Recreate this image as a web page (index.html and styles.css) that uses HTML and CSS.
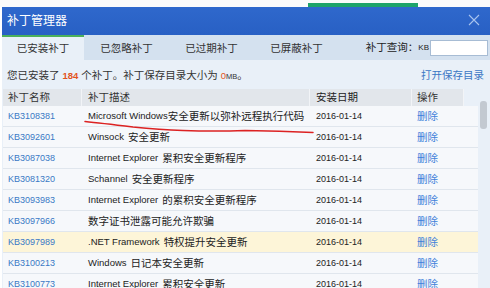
FILE: index.html
```html
<!DOCTYPE html>
<html lang="zh-CN">
<head>
<meta charset="utf-8">
<title>补丁管理器</title>
<link rel="stylesheet" href="styles.css">
</head>
<body>
<div class="topstrip"><div class="greenbar"></div></div>
<div class="window">
  <div class="titlebar">
    <span class="title">补丁管理器</span>
    <svg class="close" width="12" height="12" viewBox="0 0 12 12"><path d="M1 1L11 11M11 1L1 11" stroke="#a9c4ee" stroke-width="1.1" fill="none"/></svg>
  </div>
  <div class="tabs">
    <div class="tab active">已安装补丁</div>
    <div class="tab">已忽略补丁</div>
    <div class="tab">已过期补丁</div>
    <div class="tab">已屏蔽补丁</div>
    <div class="search"><span>补丁查询：</span><span class="en kb">KB</span><span class="input"></span></div>
  </div>
  <div class="info">
    <span>您已安装了 <b class="num en">184</b> 个补丁。补丁保存目录大小为 <b class="zero en">0</b><span class="en mb">MB</span>。</span>
    <span class="link">打开保存目录</span>
  </div>
  <div class="listwrap">
    <div class="list">
      <div class="row head">
        <div class="c name">补丁名称</div>
        <div class="c desc">补丁描述</div>
        <div class="c date">安装日期</div>
        <div class="c op">操作</div>
        <div class="c fill"></div>
      </div>
      <div class="row"><div class="c name kbid">KB3108381</div><div class="c desc"><span class="en">Microsoft Windows</span>安全更新以弥补远程执行代码</div><div class="c date">2016-01-14</div><div class="c op del">删除</div><div class="c fill"></div></div>
      <div class="row"><div class="c name kbid">KB3092601</div><div class="c desc"><span class="en sp">Winsock</span>安全更新</div><div class="c date">2016-01-14</div><div class="c op del">删除</div><div class="c fill"></div></div>
      <div class="row"><div class="c name kbid">KB3087038</div><div class="c desc"><span class="en sp">Internet Explorer</span>累积安全更新程序</div><div class="c date">2016-01-14</div><div class="c op del">删除</div><div class="c fill"></div></div>
      <div class="row"><div class="c name kbid">KB3081320</div><div class="c desc"><span class="en sp">Schannel</span>安全更新程序</div><div class="c date">2016-01-14</div><div class="c op del">删除</div><div class="c fill"></div></div>
      <div class="row"><div class="c name kbid">KB3093983</div><div class="c desc"><span class="en sp">Internet Explorer</span>的累积安全更新程序</div><div class="c date">2016-01-14</div><div class="c op del">删除</div><div class="c fill"></div></div>
      <div class="row"><div class="c name kbid">KB3097966</div><div class="c desc">数字证书泄露可能允许欺骗</div><div class="c date">2016-01-14</div><div class="c op del">删除</div><div class="c fill"></div></div>
      <div class="row hl"><div class="c name kbid">KB3097989</div><div class="c desc"><span class="en sp">.NET Framework</span>特权提升安全更新</div><div class="c date">2016-01-14</div><div class="c op del">删除</div><div class="c fill"></div></div>
      <div class="row"><div class="c name kbid">KB3100213</div><div class="c desc"><span class="en sp">Windows</span>日记本安全更新</div><div class="c date">2016-01-14</div><div class="c op del">删除</div><div class="c fill"></div></div>
      <div class="row"><div class="c name kbid">KB3100773</div><div class="c desc"><span class="en sp">Internet Explorer</span>累积安全更新</div><div class="c date">2016-01-14</div><div class="c op del">删除</div><div class="c fill"></div></div>
    </div>
    <div class="scroll"><div class="thumb"></div></div>
  </div>
</div>
<svg class="mark" width="490" height="288" viewBox="0 0 490 288"><path d="M85,121.5 Q100,123 133,127 Q160,129.5 183,130.5 Q215,131.5 245,130.5 Q280,131 313,132.5" stroke="#dc2222" stroke-width="1.5" fill="none" stroke-linecap="round"/></svg>
</body>
</html>
```

FILE: styles.css
```css
html, body {
  margin: 0;
  padding: 0;
}
body {
  width: 490px;
  height: 288px;
  overflow: hidden;
  position: relative;
  background: #ffffff;
  font-family: "Liberation Sans", "Noto Sans CJK SC", sans-serif;
  font-size: 10.5px;
  color: #222;
  line-height: 1;
}
.en { font-size: 9.5px; }
.sp { margin-right: 4px; }
.topstrip {
  height: 7px;
  display: flex;
  padding-left: 308px;
  background: #fbfbfb;
}
.greenbar {
  width: 110px;
  height: 4px;
  margin-top: 3px;
  background: #1ea36a;
}
.window {
  margin-left: 2px;
  background: #e9f0f8;
}
.titlebar {
  height: 28px;
  background: linear-gradient(#2f68cc, #2860c4);
  display: flex;
  align-items: center;
  justify-content: space-between;
  padding: 0 10px 0 5px;
}
.title {
  color: #fff;
  font-size: 12px;
  margin-top: -1px;
}
.close { margin-top: -2px; }
.tabs {
  height: 25px;
  background: #d4e1ef;
  display: flex;
  align-items: stretch;
}
.tab {
  width: 85px;
  display: flex;
  align-items: center;
  justify-content: center;
  color: #333;
  padding-top: 2px;
}
.tab.active {
  width: 82px;
  background: #e9f0f8;
  border-top: 2px solid #4cb05a;
  padding-top: 0;
}
.search {
  margin-left: auto;
  display: flex;
  align-items: center;
  padding-right: 2px;
  color: #222;
}
.kb { font-size: 8px; margin-right: 1px; }
.input {
  width: 56px;
  height: 14px;
  background: #fff;
  border: 1px solid #a7bcd4;
}
.info {
  height: 28px;
  display: flex;
  align-items: center;
  justify-content: space-between;
  padding: 2px 6px 0 5px;
  box-sizing: border-box;
  color: #333;
}
.num { color: #e2541c; font-weight: bold; }
.zero { color: #e2541c; font-weight: normal; }
.mb { font-size: 7.5px; }
.link { color: #3a76c4; }
.listwrap {
  display: flex;
  padding-left: 1px;
  padding-top: 1px;
}
.list { width: 475px; }
.row {
  display: flex;
  height: 20px;
  border-bottom: 1px solid #e0e6ed;
  background: #f6f8fb;
}
.row.head {
  height: 17px;
  border-bottom: none;
  background: #e2e6eb;
  color: #333;
}
.row.hl { background: #fdf5d8; }
.c {
  display: flex;
  align-items: center;
  box-sizing: border-box;
  white-space: nowrap;
  overflow: hidden;
}
.name { width: 79px; padding-left: 5px; }
.desc { width: 228px; padding-left: 6px; }
.date { width: 102px; padding-left: 6px; font-size: 9px; color: #222; }
.op { width: 52px; padding-left: 5px; }
.fill { width: 14px; }
.head .c { border-right: 1px solid #f2f4f7; font-size: 10.5px; }
.head .fill { background: #e9f0f8; border-right: none; }
.kbid { color: #3a78c5; font-size: 9px; }
.del { color: #3f80da; }
.scroll {
  width: 12px;
  position: relative;
}
.thumb {
  margin: 12px 0 0 2px;
  width: 7px;
  height: 28px;
  border-radius: 3px;
  background: #c3c9d1;
}
.mark {
  position: absolute;
  left: 0;
  top: 0;
  pointer-events: none;
}
```
